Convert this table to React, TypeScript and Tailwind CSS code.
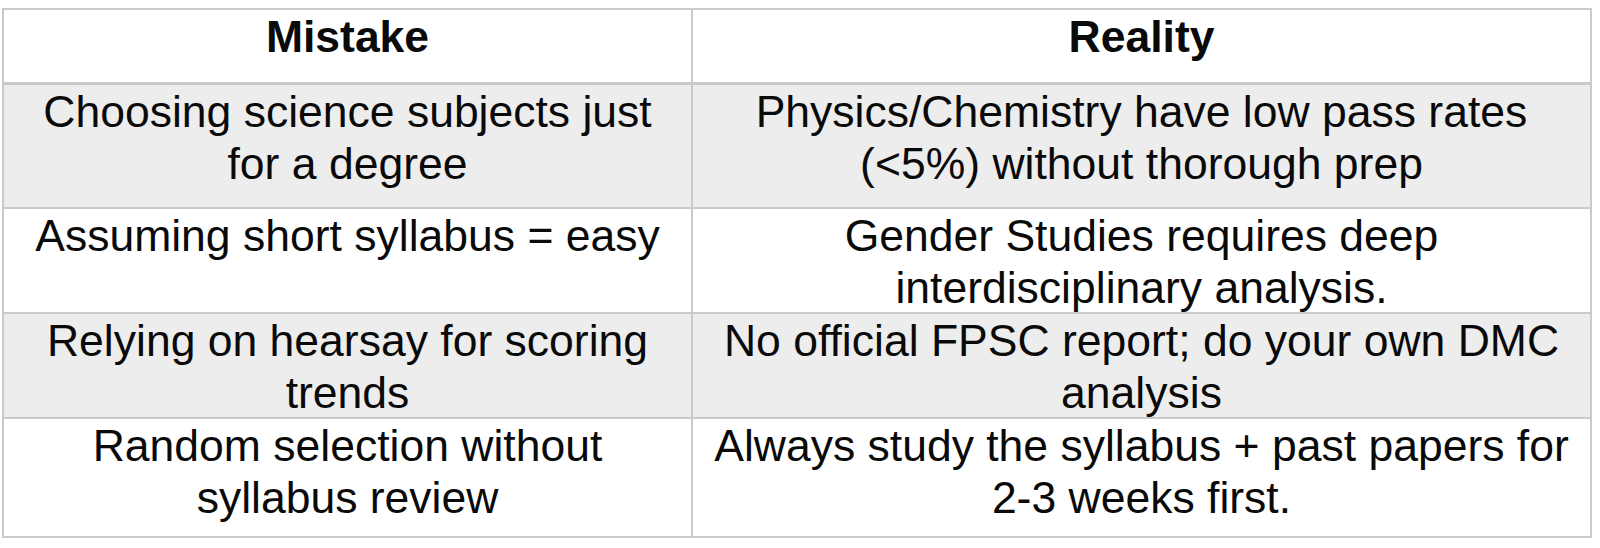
const rows = [
  {
    mistake: ["Choosing science subjects just", "for a degree"],
    reality: ["Physics/Chemistry have low pass rates", "(<5%) without thorough prep"],
    h: "h-[124px]",
    bg: "bg-[#ededed]",
  },
  {
    mistake: ["Assuming short syllabus = easy"],
    reality: ["Gender Studies requires deep", "interdisciplinary analysis."],
    h: "h-[105px]",
    bg: "bg-white",
  },
  {
    mistake: ["Relying on hearsay for scoring", "trends"],
    reality: ["No official FPSC report; do your own DMC", "analysis"],
    h: "h-[105px]",
    bg: "bg-[#ededed]",
  },
  {
    mistake: ["Random selection without", "syllabus review"],
    reality: ["Always study the syllabus + past papers for", "2-3 weeks first."],
    h: "h-[117px]",
    bg: "bg-white",
  },
];

function Lines({ lines }: { lines: string[] }) {
  return (
    <>
      {lines.map((l) => (
        <div key={l} className="whitespace-nowrap">
          {l}
        </div>
      ))}
    </>
  );
}

export default function App() {
  return (
    <div className="h-[548px] w-[1600px] bg-white pt-[8px] pl-[2px] font-['Liberation_Sans',Arial,sans-serif] text-[44.5px] leading-[52px] text-[#0a0a0a]">
      <div className="w-[1590px] border-2 border-[#cacaca]">
        <div className="flex h-[75px] border-b-[3px] border-[#cacaca] bg-white font-bold">
          <div className="w-[689px] shrink-0 border-r-2 border-[#cacaca] pt-[1px] text-center">Mistake</div>
          <div className="flex-1 pt-[1px] text-center">Reality</div>
        </div>
        {rows.map((r, i) => (
          <div
            key={i}
            className={`flex ${r.h} ${r.bg} ${i < rows.length - 1 ? "border-b-2 border-[#cacaca]" : ""}`}
          >
            <div className="w-[689px] shrink-0 border-r-2 border-[#cacaca] pt-[1px] text-center">
              <Lines lines={r.mistake} />
            </div>
            <div className="flex-1 pt-[1px] text-center">
              <Lines lines={r.reality} />
            </div>
          </div>
        ))}
      </div>
    </div>
  );
}
